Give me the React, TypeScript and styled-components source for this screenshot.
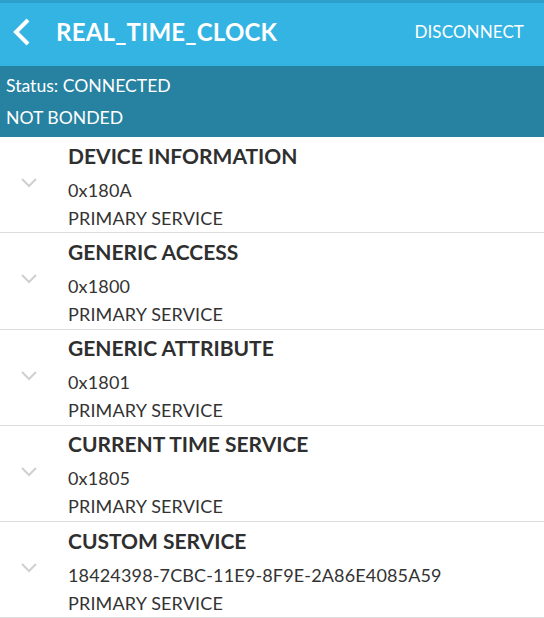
import React from "react";
import styled, { createGlobalStyle } from "styled-components";

const Global = createGlobalStyle`
  html, body { margin: 0; padding: 0; background: #fff; }
  body { font-family: "Lato", "Open Sans", sans-serif; }
`;

const Page = styled.div`
  width: 544px;
  display: flex;
  flex-direction: column;
`;

const Header = styled.header`
  height: 66px;
  background: #33b4e3;
  border-top: 3px solid #2d9fca;
  box-sizing: border-box;
  display: flex;
  align-items: center;
  padding: 0 20px 6px 12px;
  color: #fff;
`;

const Back = styled.svg`
  width: 20px;
  height: 30px;
  flex: none;
`;

const Title = styled.h1`
  margin: 0 0 0 24px;
  font-family: "Lato", sans-serif;
  font-weight: 700;
  font-size: 24px;
  letter-spacing: 0.2px;
  flex: 1;
`;

const Disconnect = styled.span`
  font-family: "Lato", sans-serif;
  font-size: 17px;
  letter-spacing: 0.1px;
`;

const StatusBar = styled.div`
  background: #2782a1;
  height: 71px;
  box-sizing: border-box;
  padding: 1px 6px 0;
  display: flex;
  flex-direction: column;
  justify-content: center;
  gap: 8px;
  color: #fff;
  font-family: "Lato", sans-serif;
  font-size: 17.6px;
  line-height: 24px;
`;

const Row = styled.div`
  height: 96.25px;
  box-sizing: border-box;
  border-bottom: 1px solid #dcdcdc;
  display: flex;
  align-items: center;
`;

const ChevronCell = styled.div`
  width: 68px;
  flex: none;
  display: flex;
  padding-left: 20px;
  box-sizing: border-box;
  margin-top: -3px;
`;

const Info = styled.div`
  display: flex;
  flex-direction: column;
  font-family: "Lato", sans-serif;
  color: #333;
  margin-top: 5px;
`;

const Name = styled.div`
  font-weight: 700;
  font-size: 21px;
  line-height: 26px;
  margin-bottom: 7px;
  color: #2f2f2f;
`;

const Sub = styled.div`
  font-size: 18px;
  letter-spacing: 0.15px;
  line-height: 28px;
  color: #333;
`;

const services = [
  { name: "DEVICE INFORMATION", uuid: "0x180A" },
  { name: "GENERIC ACCESS", uuid: "0x1800" },
  { name: "GENERIC ATTRIBUTE", uuid: "0x1801" },
  { name: "CURRENT TIME SERVICE", uuid: "0x1805" },
  { name: "CUSTOM SERVICE", uuid: "18424398-7CBC-11E9-8F9E-2A86E4085A59" },
];

export default function App() {
  return (
    <Page>
      <Global />
      <Header>
        <Back viewBox="0 0 20 30">
          <path d="M16 3 L4 15 L16 27" fill="none" stroke="#fff" strokeWidth="4" />
        </Back>
        <Title>REAL_TIME_CLOCK</Title>
        <Disconnect>DISCONNECT</Disconnect>
      </Header>
      <StatusBar>
        <div>Status: CONNECTED</div>
        <div>NOT BONDED</div>
      </StatusBar>
      {services.map((s) => (
        <Row key={s.name}>
          <ChevronCell>
            <svg width="18" height="12" viewBox="0 0 18 12">
              <path d="M2 2 L9 9 L16 2" fill="none" stroke="#cfcfcf" strokeWidth="2" />
            </svg>
          </ChevronCell>
          <Info>
            <Name>{s.name}</Name>
            <Sub>{s.uuid}</Sub>
            <Sub>PRIMARY SERVICE</Sub>
          </Info>
        </Row>
      ))}
    </Page>
  );
}
